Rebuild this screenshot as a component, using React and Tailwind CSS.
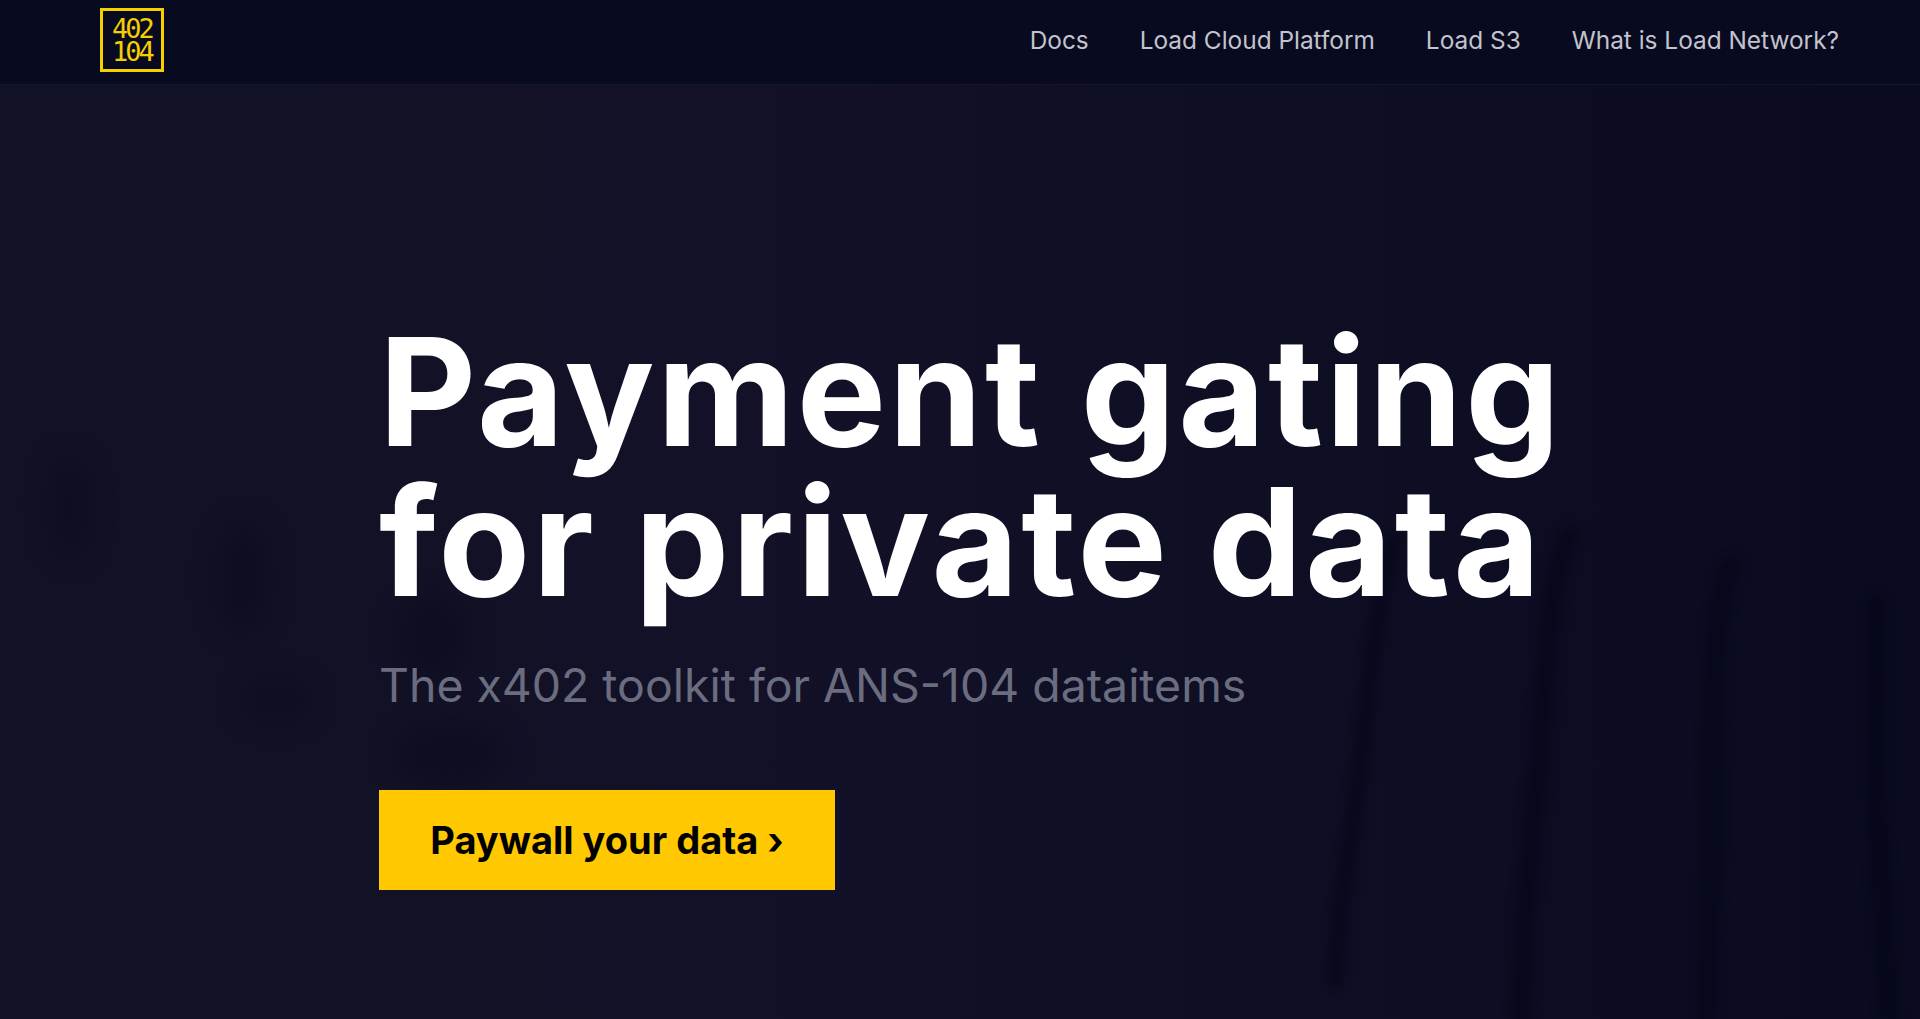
import React from 'react';

const NAV_LINKS = ['Docs', 'Load Cloud Platform', 'Load S3', 'What is Load Network?'];

const Drips = () => (
    <svg className="absolute inset-0 w-full h-full" viewBox="0 0 1920 934" preserveAspectRatio="none" fill="none" aria-hidden="true">
        <defs>
            <filter id="soft" x="-100%" y="-100%" width="300%" height="300%" colorInterpolationFilters="sRGB">
                <feGaussianBlur stdDeviation="14" />
            </filter>
            <filter id="softer" x="-50%" y="-50%" width="200%" height="200%" colorInterpolationFilters="sRGB">
                <feGaussianBlur stdDeviation="5" />
            </filter>
        </defs>
        <g filter="url(#soft)" fill="#09091a" opacity="0.45">
            <ellipse cx="70" cy="422" rx="18" ry="50" />
            <ellipse cx="243" cy="493" rx="24" ry="55" />
            <ellipse cx="277" cy="615" rx="34" ry="18" />
            <ellipse cx="433" cy="552" rx="34" ry="42" />
            <ellipse cx="450" cy="670" rx="55" ry="30" />
        </g>
        <g filter="url(#softer)" stroke="#050618" strokeLinecap="round" opacity="0.65">
            <path d="M1395 455 C1385 480 1375 540 1365 640 C1355 740 1340 800 1335 895" strokeWidth="15" />
            <path d="M1569 452 C1550 490 1548 560 1540 660 C1532 760 1522 840 1521 934" strokeWidth="19" />
            <path d="M1731 482 C1715 510 1712 600 1712 700 C1712 800 1708 880 1707 934" strokeWidth="20" />
            <path d="M1877 518 C1874 600 1876 700 1880 780 C1884 850 1888 900 1889 934" strokeWidth="20" />
        </g>
    </svg>
);

const App = () => {
    return (
        <div className="h-[1019px] overflow-hidden flex flex-col bg-[#080a20] font-['Inter',sans-serif]">
            <header className="h-[85px] shrink-0 flex items-center justify-between pl-[100px] pr-[81px] bg-[#080a20] border-b border-[#15152b]">
                <div className="w-[64px] h-[64px] mb-[4px] border-[3px] border-[#f5cf00] flex items-center justify-center">
                    <span className="font-['DejaVu_Sans_Mono',monospace] text-[#f5cf00] text-[27px] leading-[23px] tracking-[-3px] text-center">
                        402<br />104
                    </span>
                </div>
                <nav className="flex items-center gap-[51px] mb-[3px]">
                    {NAV_LINKS.map(link => (
                        <a key={link} className="text-[24.4px] text-[#c3c3cc]">{link}</a>
                    ))}
                </nav>
            </header>

            <main className="relative flex-1 bg-gradient-to-r from-[#121226] via-[#121127] via-40% to-[#0a0b20] pl-[379px] pt-[232px]">
                <Drips />
                <div className="relative">
                    <h1 className="text-[150px] leading-[150px] font-bold tracking-[2.7px] text-white">
                        Payment gating<br />for private data
                    </h1>
                    <p className="mt-[41px] text-[46.4px] leading-[54px] text-[#6a6d7f]">
                        The x402 toolkit for ANS-104 dataitems
                    </p>
                    <button type="button" className="mt-[78px] w-[456px] h-[100px] bg-[#ffc800] text-black text-[38px] font-bold">
                        Paywall your data ›
                    </button>
                </div>
            </main>
        </div>
    );
};

export default App;
